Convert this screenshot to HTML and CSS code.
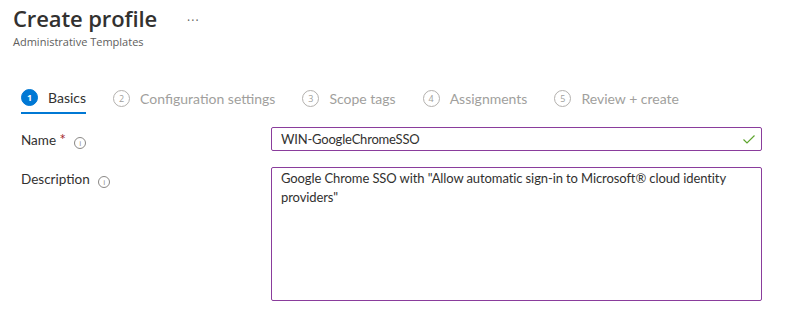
FILE: index.html
```html
<!DOCTYPE html>
<html lang="en">

<head>
    <meta charset="UTF-8">
    <meta name="viewport" content="width=device-width, initial-scale=1.0">
    <title>Create profile</title>
    <link rel="stylesheet" href="styles.css">
</head>

<body>
    <header class="page-header">
        <div class="title-row">
            <h1>Create profile</h1>
            <span class="more">&middot;&middot;&middot;</span>
        </div>
        <div class="subtitle">Administrative Templates</div>
    </header>

    <nav class="steps">
        <div class="step active"><span class="num">1</span><span class="label">Basics</span></div>
        <div class="step"><span class="num">2</span><span class="label">Configuration settings</span></div>
        <div class="step"><span class="num">3</span><span class="label">Scope tags</span></div>
        <div class="step"><span class="num">4</span><span class="label">Assignments</span></div>
        <div class="step"><span class="num">5</span><span class="label">Review + create</span></div>
    </nav>

    <form class="form">
        <div class="row">
            <label class="field-label">Name <span class="req">*</span> <span class="info">i</span></label>
            <div class="input-box">
                <span class="value">WIN-GoogleChromeSSO</span>
                <svg class="check" width="12" height="9" viewBox="0 0 12 9">
                    <path d="M0.5 4.5 L4 8 L11.5 0.5" fill="none" stroke="#5ea52e" stroke-width="1.2" />
                </svg>
            </div>
        </div>
        <div class="row">
            <label class="field-label">Description <span class="info">i</span></label>
            <div class="textarea-box">Google Chrome SSO with "Allow automatic sign-in to Microsoft&reg; cloud identity providers"</div>
        </div>
    </form>
</body>

</html>
```

FILE: styles.css
```css
* {
    box-sizing: border-box;
}

body {
    margin: 0;
    font-family: "Open Sans", "Noto Sans", sans-serif;
    color: #323130;
    background: #ffffff;
}

/* Header */
.page-header {
    padding: 2px 13px 0;
}

.title-row {
    display: flex;
    align-items: center;
    gap: 30px;
}

.title-row h1 {
    margin: 0;
    font-size: 22px;
    font-weight: 600;
    line-height: 32px;
    letter-spacing: -0.1px;
}

.more {
    color: #605e5c;
    font-size: 12px;
    letter-spacing: 1px;
    margin-top: 4px;
}

.subtitle {
    font-size: 11px;
    color: #605e5c;
    line-height: 16px;
    margin-top: 0;
}

/* Steps */
.steps {
    display: flex;
    gap: 27px;
    margin: 33px 0 0 21px;
    font-family: "Lato", "Open Sans", sans-serif;
}

.step {
    display: flex;
    align-items: center;
    gap: 10px;
    height: 31px;
    color: #a19f9d;
    font-size: 14px;
}

.step .num {
    width: 17px;
    height: 17px;
    border: 1px solid #b3b0ad;
    border-radius: 50%;
    font-size: 9px;
    display: flex;
    align-items: center;
    justify-content: center;
    color: #a19f9d;
    font-family: "Open Sans", sans-serif;
}

.step.active {
    color: #323130;
    border-bottom: 2px solid #0078d4;
}

.step.active .num {
    background: #0078d4;
    border-color: #0078d4;
    color: #ffffff;
    font-weight: 700;
}

/* Form */
.form {
    margin: 13px 0 0 21px;
    font-family: "Lato", "Open Sans", sans-serif;
}

.row {
    display: grid;
    grid-template-columns: 250px 491px;
    margin-bottom: 15px;
}

.field-label {
    font-size: 13.5px;
    line-height: 24px;
    color: #323130;
}

.req {
    color: #a4262c;
    font-size: 15px;
}

.info {
    display: inline-flex;
    width: 12px;
    height: 12px;
    border: 1px solid #8a8886;
    border-radius: 50%;
    font-size: 8px;
    color: #8a8886;
    align-items: center;
    justify-content: center;
    margin-left: 5px;
    vertical-align: -1px;
    font-family: "Open Sans", sans-serif;
}

.input-box {
    height: 24px;
    border: 1px solid #8a3d9c;
    border-radius: 2px;
    display: flex;
    align-items: center;
    justify-content: space-between;
    padding: 0 6px 0 9px;
    font-size: 13px;
    letter-spacing: -0.2px;
}

.textarea-box {
    height: 134px;
    border: 1px solid #8a3d9c;
    border-radius: 2px;
    padding: 1px 9px;
    font-size: 13px;
    line-height: 19px;
    letter-spacing: -0.1px;
}
```
